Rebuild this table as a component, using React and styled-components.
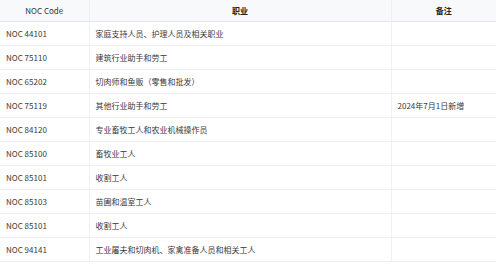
import React from "react";
import styled, { createGlobalStyle } from "styled-components";

const Global = createGlobalStyle`
  html, body { margin: 0; padding: 0; background: #fff; }
  body { font-family: "Noto Sans CJK SC", "Noto Sans", sans-serif; }
`;

const Table = styled.table`
  width: 496px;
  border-collapse: collapse;
  table-layout: fixed;
  font-size: 8px;
  color: #3a3a3a;
`;

const HeadCell = styled.th`
  height: 21px;
  padding: 0 6px;
  background: #f8f9fa;
  font-weight: ${(p) => (p.$light ? 400 : 700)};
  color: ${(p) => (p.$light ? "#333" : "#222")};
  text-align: center;
  border-bottom: 1px solid #dfe6ee;
  border-right: 1px solid #eef0f2;
  &:last-child { border-right: none; }
`;

const Cell = styled.td`
  height: 23px;
  padding: 0 6px;
  text-align: left;
  border-bottom: 1px solid #f0f0f0;
  border-right: 1px solid #f0f1f3;
  white-space: nowrap;
  &:last-child { border-right: none; }
`;

const rows = [
  ["NOC 44101", "家庭支持人员、护理人员及相关职业", ""],
  ["NOC 75110", "建筑行业助手和劳工", ""],
  ["NOC 65202", "切肉师和鱼贩（零售和批发）", ""],
  ["NOC 75119", "其他行业助手和劳工", "2024年7月1日新增"],
  ["NOC 84120", "专业畜牧工人和农业机械操作员", ""],
  ["NOC 85100", "畜牧业工人", ""],
  ["NOC 85101", "收割工人", ""],
  ["NOC 85103", "苗圃和温室工人", ""],
  ["NOC 85101", "收割工人", ""],
  ["NOC 94141", "工业屠夫和切肉机、家禽准备人员和相关工人", ""],
];

export default function App() {
  return (
    <>
      <Global />
      <Table>
        <colgroup>
          <col style={{ width: 89 }} />
          <col style={{ width: 302 }} />
          <col style={{ width: 105 }} />
        </colgroup>
        <thead>
          <tr>
            <HeadCell $light>NOC Code</HeadCell>
            <HeadCell>职业</HeadCell>
            <HeadCell>备注</HeadCell>
          </tr>
        </thead>
        <tbody>
          {rows.map((r, i) => (
            <tr key={i}>
              <Cell>{r[0]}</Cell>
              <Cell>{r[1]}</Cell>
              <Cell>{r[2]}</Cell>
            </tr>
          ))}
        </tbody>
      </Table>
    </>
  );
}
